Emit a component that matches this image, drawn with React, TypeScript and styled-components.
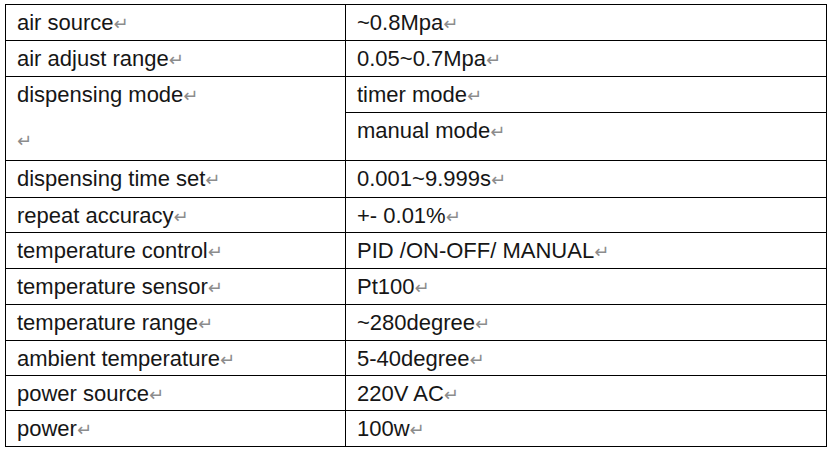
import React from "react";
import styled, { createGlobalStyle } from "styled-components";

const Global = createGlobalStyle`
  html, body { margin: 0; padding: 0; background: #ffffff; }
  body { font-family: "Liberation Sans", Arial, sans-serif; }
`;

const Page = styled.div`
  padding: 4px 0 0 5px;
  width: 834px;
  height: 454px;
  box-sizing: border-box;
`;

const Table = styled.table`
  border-collapse: collapse;
  width: 822px;
  table-layout: fixed;
  font-family: "Liberation Sans", Arial, sans-serif;
  font-size: 22px;
  color: #161616;
`;

const Row = styled.tr<{ $h?: number }>`
  height: ${(p) => p.$h ?? 36}px;
`;

const Cell = styled.td`
  border: 1px solid #000;
  padding: 6px 0 0 11px;
  vertical-align: top;
  line-height: 24px;
  white-space: nowrap;
  box-sizing: border-box;
`;

const Para = styled.div<{ $gap?: number }>`
  margin-top: ${(p) => p.$gap ?? 0}px;
`;

const Mark = styled.span`
  font-family: "DejaVu Sans", sans-serif;
  font-size: 18px;
  line-height: 0;
  color: #8c8c8c;
`;

type Item = { label: string; value: string };

const top: Item[] = [
  { label: "air source", value: "~0.8Mpa" },
  { label: "air adjust range", value: "0.05~0.7Mpa" },
];

const bottom: Item[] = [
  { label: "dispensing time set", value: "0.001~9.999s" },
  { label: "repeat accuracy", value: "+- 0.01%" },
  { label: "temperature control", value: "PID /ON-OFF/ MANUAL" },
  { label: "temperature sensor", value: "Pt100" },
  { label: "temperature range", value: "~280degree" },
  { label: "ambient temperature", value: "5-40degree" },
  { label: "power source", value: "220V AC" },
  { label: "power", value: "100w" },
];

const heights = [37, 35, 36, 36, 36, 35, 35, 36];

const Text = ({ children }: { children: React.ReactNode }) => (
  <>
    {children}
    <Mark>↵</Mark>
  </>
);

export default function App() {
  return (
    <>
      <Global />
      <Page>
        <Table>
          <colgroup>
            <col style={{ width: 340 }} />
            <col />
          </colgroup>
          <tbody>
            {top.map((r) => (
              <Row key={r.label}>
                <Cell>
                  <Text>{r.label}</Text>
                </Cell>
                <Cell>
                  <Text>{r.value}</Text>
                </Cell>
              </Row>
            ))}
            <Row>
              <Cell rowSpan={2}>
                <Para>
                  <Text>dispensing mode</Text>
                </Para>
                <Para $gap={21}>
                  <Mark>↵</Mark>
                </Para>
              </Cell>
              <Cell>
                <Text>timer mode</Text>
              </Cell>
            </Row>
            <Row $h={48}>
              <Cell>
                <Text>manual mode</Text>
              </Cell>
            </Row>
            {bottom.map((r, i) => (
              <Row key={r.label} $h={heights[i]}>
                <Cell>
                  <Text>{r.label}</Text>
                </Cell>
                <Cell>
                  <Text>{r.value}</Text>
                </Cell>
              </Row>
            ))}
          </tbody>
        </Table>
      </Page>
    </>
  );
}
